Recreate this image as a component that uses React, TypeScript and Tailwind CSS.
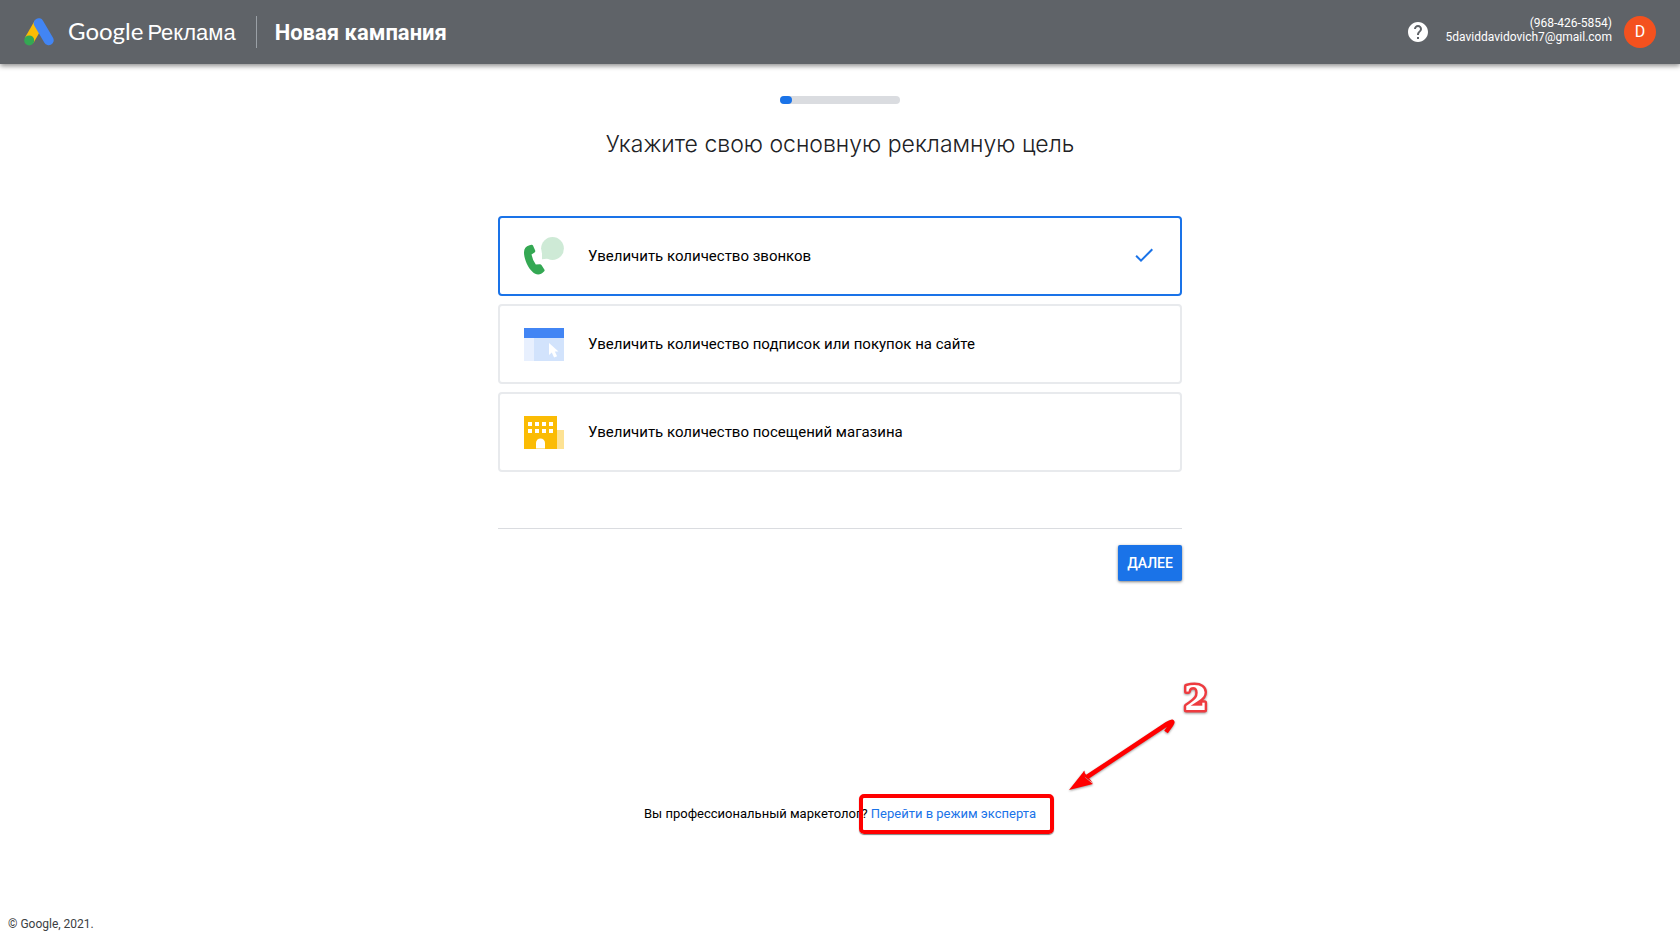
import { useState } from "react";
import type { ReactNode } from "react";

function AdsLogo() {
  return (
    <svg width="30" height="28" viewBox="0 0 30 28" aria-hidden="true">
      <path d="M5.2 22.2 15 5.2" stroke="#fbbc04" strokeWidth="10" />
      <path d="M14.7 5.2 24.7 22.2" stroke="#4285f4" strokeWidth="10" strokeLinecap="round" />
      <circle cx="5.2" cy="22.4" r="5" fill="#34a853" />
    </svg>
  );
}

function CallsIcon() {
  return (
    <svg width="40" height="40" viewBox="0 0 40 40" aria-hidden="true">
      <circle cx="28.5" cy="12.5" r="11.400" fill="#ceead6" />
      <path d="M18 14V23.200L25 22.500Z" fill="#ceead6" />
      <path
        d="M5.500 9.300 7.500 8.800Q8.500 8.700 9 9.600L11.200 14.600Q11.500 15.800 10.500 16.500L7.500 18.600Q8.500 24 11.800 28.500L15.700 28.300Q17 28.200 17.600 29.200L20.500 33.700Q20.900 34.700 20 35.500C16.500 39.500 12 39.400 8.400 35.800C3.800 31.500 0.300 23.500 0 17C-0.100 12.800 1.500 10.300 5.500 9.300Z"
        fill="#34a853"
      />
    </svg>
  );
}

function SiteIcon() {
  return (
    <svg width="40" height="40" viewBox="0 0 40 40" aria-hidden="true">
      <path d="M0 14h10v23H0z" fill="#e8f0fe" />
      <path d="M10 14h30v23H10z" fill="#d2e3fc" />
      <path d="M0 4h40v10H0z" fill="#4285f4" />
      <path d="M25 19v12l2.800-2.400 2.300 5 3-1.400-2.300-4.700H34.500z" fill="#fff" />
    </svg>
  );
}

function StoreIcon() {
  return (
    <svg width="40" height="40" viewBox="0 0 40 40" aria-hidden="true">
      <path d="M33 18h7v19h-7z" fill="#fde293" />
      <path d="M0 4h33v33H0z" fill="#fbbc04" />
      <path
        d="M4 10h4v4H4zM11 10h4v4h-4zM18 10h4v4h-4zM25 10h4v4h-4zM4 17h4v4H4zM11 17h4v4h-4zM18 17h4v4h-4zM25 17h4v4h-4z"
        fill="#fff"
      />
      <path d="M12 36v-5a4.500 4.500 0 0 1 9 0v5z" fill="#fff" />
      <path d="M12 36h9v1h-9z" fill="#fde293" />
    </svg>
  );
}

function HelpIcon() {
  return (
    <svg width="24" height="24" viewBox="0 0 24 24" fill="#fff" aria-hidden="true">
      <path d="M12 2C6.480 2 2 6.480 2 12s4.480 10 10 10 10-4.480 10-10S17.520 2 12 2zm1 17h-2v-2h2v2zm2.070-7.750-.9.920C13.450 12.900 13 13.500 13 15h-2v-.5c0-1.100.450-2.100 1.170-2.830l1.240-1.260c.370-.360.590-.860.590-1.410 0-1.100-.9-2-2-2s-2 .9-2 2H8c0-2.210 1.790-4 4-4s4 1.790 4 4c0 .880-.360 1.680-.930 2.250z" />
    </svg>
  );
}

const goals: { id: string; label: string; icon: ReactNode }[] = [
  { id: "calls", label: "Увеличить количество звонков", icon: <CallsIcon /> },
  { id: "site", label: "Увеличить количество подписок или покупок на сайте", icon: <SiteIcon /> },
  { id: "store", label: "Увеличить количество посещений магазина", icon: <StoreIcon /> },
];

function Header() {
  return (
    <header className="flex h-16 items-center justify-between bg-[#5f6368] px-6 text-white shadow-[0_2px_5px_rgba(0,0,0,0.45)]">
      <div className="flex items-center">
        <AdsLogo />
        <div className="ml-3.5 flex items-baseline gap-1 whitespace-nowrap">
          <span className="font-['Lato',sans-serif] text-2xl">Google</span>
          <span className="font-['Liberation_Sans',sans-serif] text-[22px]">Реклама</span>
        </div>
        <div className="mr-[18px] ml-5 h-8 w-px bg-[#9aa0a6]" />
        <h1 className="text-[22px] font-bold">Новая кампания</h1>
      </div>

      <div className="flex items-center">
        <button type="button" aria-label="Справка">
          <HelpIcon />
        </button>
        <div className="ml-4 pb-1 text-right text-xs leading-[14px]">
          <p>(968-426-5854)</p>
          <p>5daviddavidovich7@gmail.com</p>
        </div>
        <button type="button" className="ml-3 size-8 rounded-full bg-[#f4511e] text-base">
          D
        </button>
      </div>
    </header>
  );
}

export default function App() {
  const [goal, setGoal] = useState("calls");

  return (
    <div className="flex min-h-screen flex-col bg-white font-['Roboto',sans-serif] text-[#202124]">
      <Header />

      <main className="mx-auto flex w-full max-w-[684px] flex-col pt-8">
        {/* Progress */}
        <div className="h-2 w-[120px] self-center rounded-full bg-[#dadce0]">
          <div className="h-2 w-3 rounded-full bg-[#1a73e8]" />
        </div>

        <h2 className="mt-6 text-center font-['Inter',sans-serif] text-[23px] font-light leading-8">
          Укажите свою основную рекламную цель
        </h2>

        {/* Goals */}
        <fieldset className="mt-14 flex flex-col gap-2 text-black">
          {goals.map((item) => (
            <label
              key={item.id}
              className={
                item.id === goal
                  ? "flex h-20 cursor-pointer items-center rounded border-2 border-[#1a73e8] px-6"
                  : "flex h-20 cursor-pointer items-center rounded border-2 border-[#e8eaed] px-6"
              }
            >
              <input
                type="radio"
                name="goal"
                className="sr-only"
                checked={item.id === goal}
                onChange={() => setGoal(item.id)}
              />
              {item.icon}
              <span className="ml-6 flex-1 text-[15px]">{item.label}</span>
              {item.id === goal && (
                <svg width="24" height="24" viewBox="0 0 24 24" fill="#1a73e8" aria-hidden="true">
                  <path d="M9 15.170 4.830 11l-1.420 1.410L9 18 21 6l-1.410-1.410z" />
                </svg>
              )}
            </label>
          ))}
        </fieldset>

        <div className="mt-14 flex justify-end border-t border-[#dadce0] pt-4">
          <button
            type="button"
            className="h-9 w-16 rounded-xs bg-[#1a73e8] text-sm font-medium text-white shadow-[0_1px_3px_rgba(0,0,0,0.5)]"
          >
            ДАЛЕЕ
          </button>
        </div>

        {/* Expert mode */}
        <p className="mt-[223px] text-center text-[13px] leading-5 text-black">
          Вы профессиональный маркетолог?{" "}
          <span className="relative inline-block">
            <a href="#expert" className="text-[#1a73e8]">
              Перейти в режим эксперта
            </a>
            <span className="pointer-events-none absolute -top-2.5 -right-[18px] -bottom-2.5 -left-3 rounded-[5px] border-4 border-[#ff0000] shadow-[0_1px_1px_rgba(0,0,0,0.5)]" />
            <svg
              className="pointer-events-none absolute -top-[134px] left-[194px] drop-shadow-[0_1px_1px_rgba(0,0,0,0.4)]"
              width="150"
              height="130"
              viewBox="0 0 150 130"
              aria-hidden="true"
            >
              <path d="M22 107 102 54Q110 49 106 55L101 62" fill="none" stroke="#f00" strokeWidth="4.500" />
              <path d="M4 120 19.500 100.500 20 107.500 28 114Z" fill="#f00" />
              <path d="M20 107 18 101 28 113Z" fill="#f00" />
              <text
                x="119"
                y="40"
                className="font-['DejaVu_Serif',serif] text-[34px] font-bold [paint-order:stroke]"
                fill="#fff"
                stroke="#ee3b3f"
                strokeWidth="5"
                strokeLinejoin="round"
              >
                2
              </text>
            </svg>
          </span>
        </p>
      </main>

      <footer className="mt-auto px-2 pt-2 pb-[7px] text-xs text-[#3c4043]">© Google, 2021.</footer>
    </div>
  );
}
